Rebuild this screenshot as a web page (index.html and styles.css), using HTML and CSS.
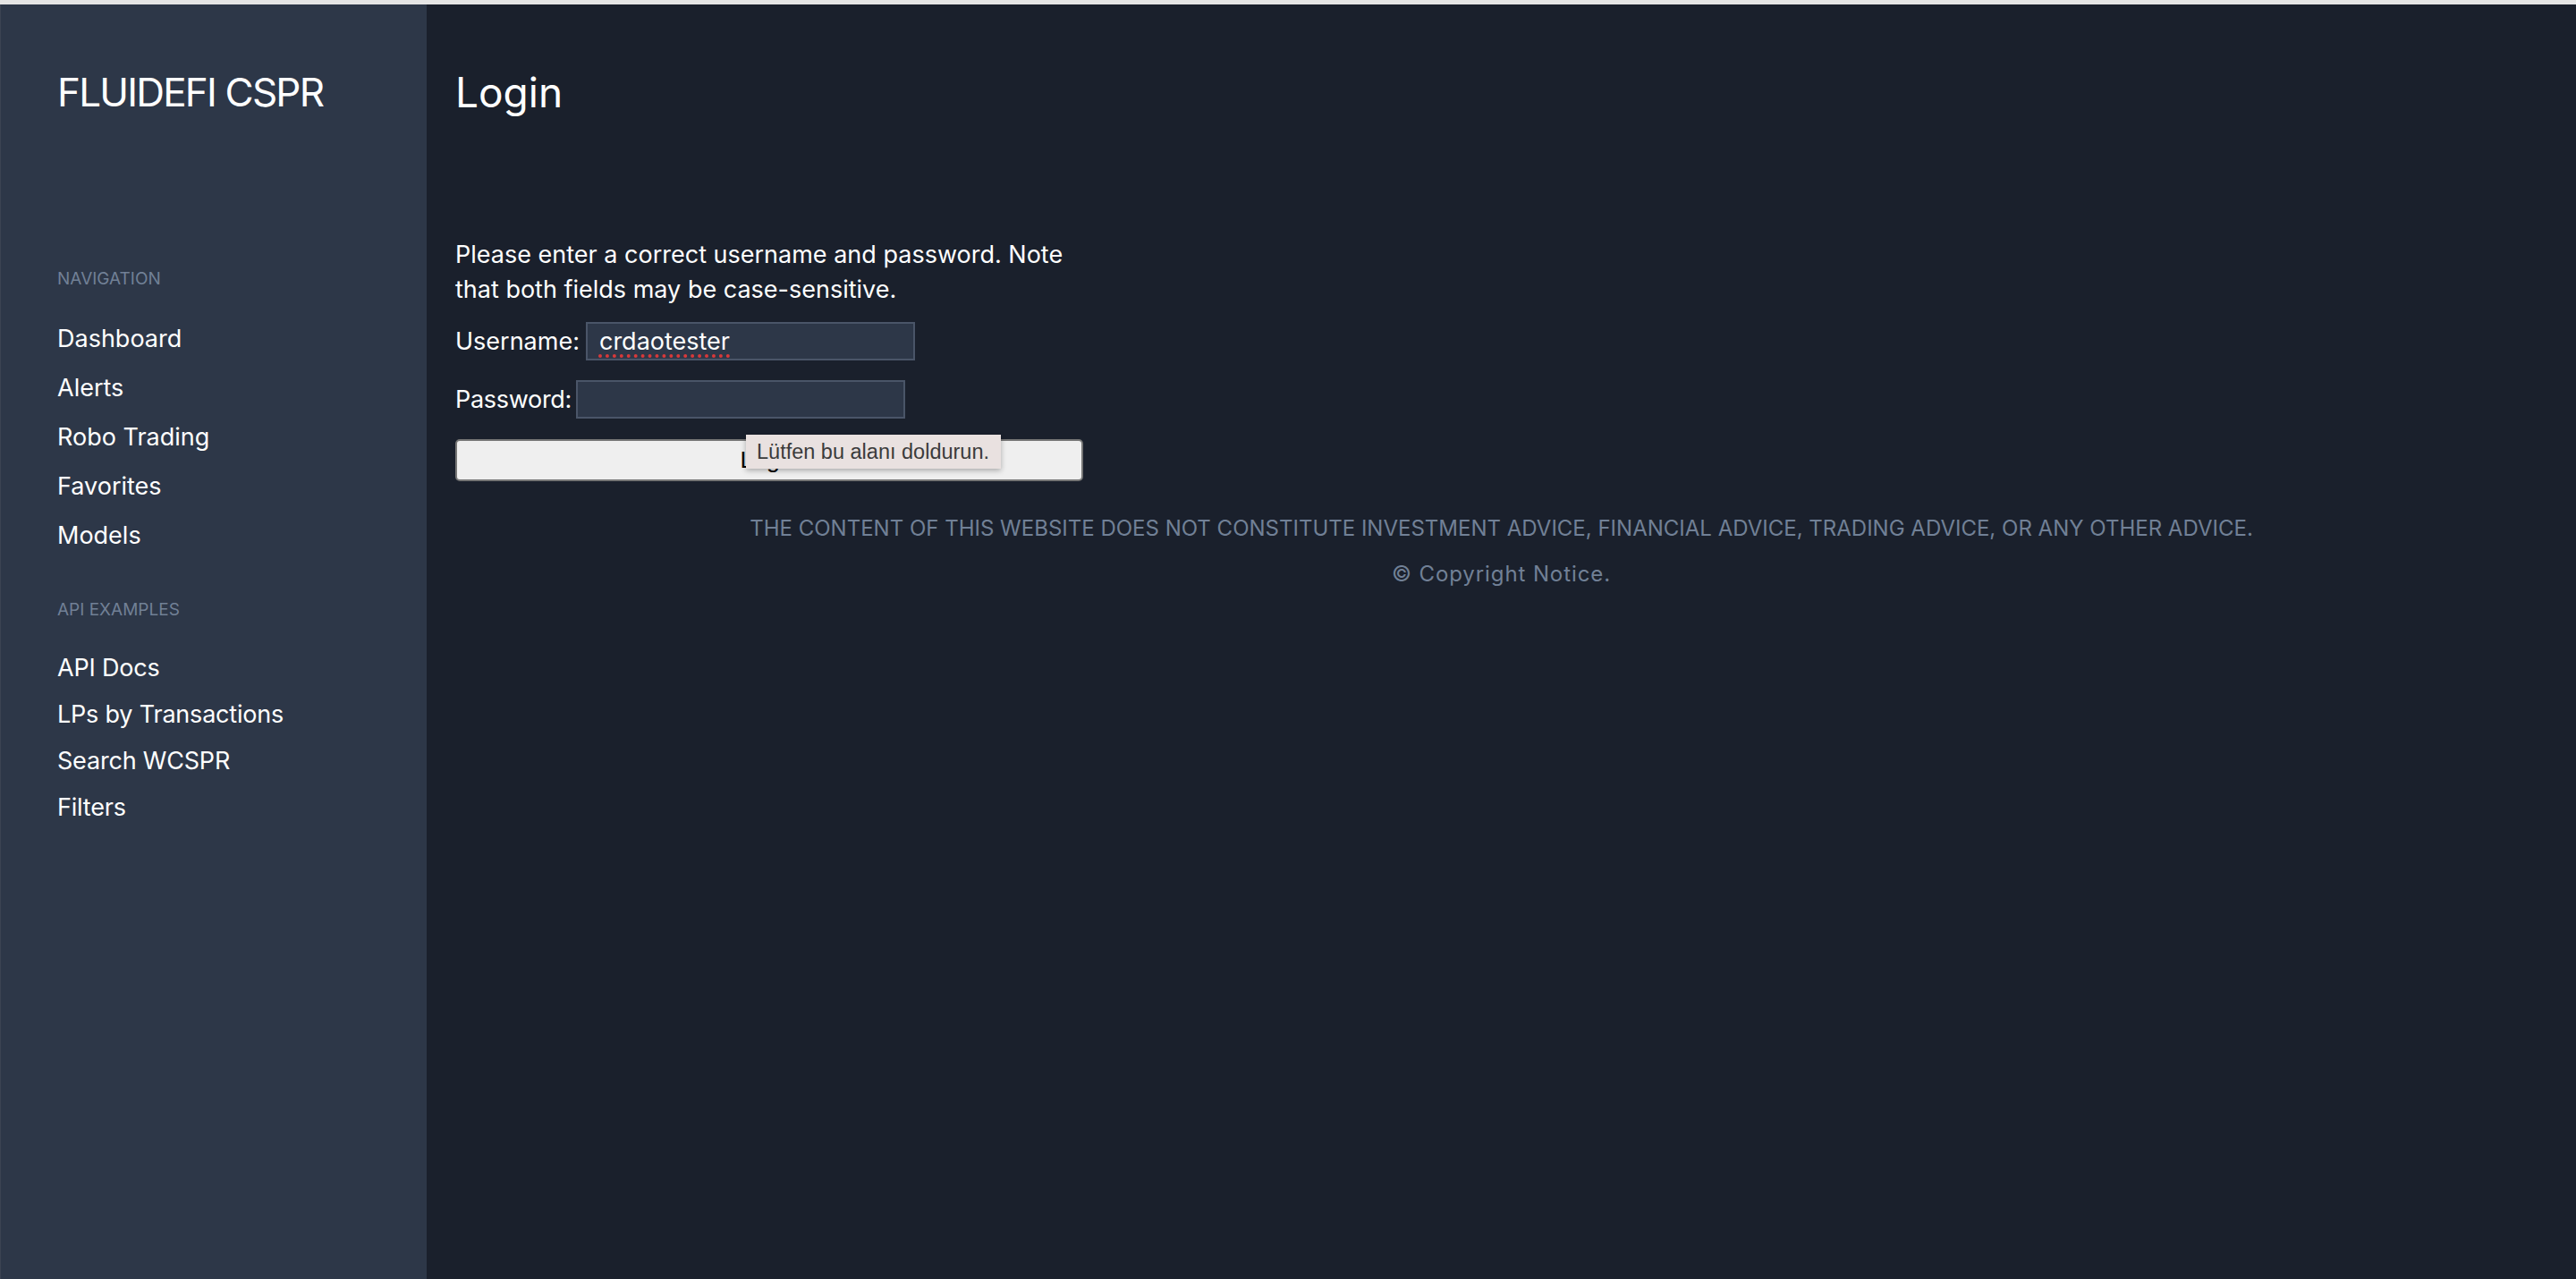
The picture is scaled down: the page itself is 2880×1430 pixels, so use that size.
FILE: index.html
```html
<!DOCTYPE html>
<html lang="en">
<head>
<meta charset="utf-8">
<title>Login | FLUIDEFI CSPR</title>
<link rel="stylesheet" href="styles.css">
</head>
<body>
<div class="page">
  <div class="topbar"></div>
  <div class="layout">
    <aside class="sidebar">
      <div class="brand">FLUIDEFI CSPR</div>
      <div class="nav-title nav-title-first">Navigation</div>
      <ul class="nav-list">
        <li><a href="#">Dashboard</a></li>
        <li><a href="#">Alerts</a></li>
        <li><a href="#">Robo Trading</a></li>
        <li><a href="#">Favorites</a></li>
        <li><a href="#">Models</a></li>
      </ul>
      <div class="nav-title nav-title-api">API Examples</div>
      <ul class="nav-list nav-list-api">
        <li><a href="#">API Docs</a></li>
        <li><a href="#">LPs by Transactions</a></li>
        <li><a href="#">Search WCSPR</a></li>
        <li><a href="#">Filters</a></li>
      </ul>
    </aside>
    <main class="main">
      <h1 class="title">Login</h1>
      <form class="login-form" onsubmit="return false">
        <p class="error">Please enter a correct username and password. Note that both fields may be case-sensitive.</p>
        <div class="field field-user">
          <label for="id_username">Username:</label>
          <div id="id_username" class="input input-user" role="textbox"><span class="misspelled">crdaotester</span></div>
        </div>
        <div class="field field-pass">
          <label for="id_password">Password:</label>
          <input id="id_password" class="input input-pass" type="password">
        </div>
        <div class="submit-wrap">
          <button class="submit" type="submit">Login</button>
          <div class="tooltip">Lütfen bu alanı doldurun.</div>
        </div>
      </form>
      <footer class="footer">
        <div class="disclaimer">THE CONTENT OF THIS WEBSITE DOES NOT CONSTITUTE INVESTMENT ADVICE, FINANCIAL ADVICE, TRADING ADVICE, OR ANY OTHER ADVICE.</div>
        <div class="copyright">© Copyright Notice.</div>
      </footer>
    </main>
  </div>
</div>
</body>
</html>
```

FILE: styles.css
```css
html, body {
  margin: 0;
  padding: 0;
  height: 100%;
  background: #1a202c;
}

body {
  font-family: "Inter", "Liberation Sans", sans-serif;
  color: #ffffff;
}

.page {
  display: flex;
  flex-direction: column;
  height: 100vh;
}

.topbar {
  height: 5px;
  background: #e5e5e5;
  flex: none;
}

.layout {
  flex: 1;
  display: flex;
  min-height: 0;
}

.sidebar {
  width: 477px;
  flex: none;
  box-sizing: border-box;
  background: #2d3748;
  border-left: 1px solid #3b4352;
  padding: 66px 0 0 63px;
}

.brand {
  font-size: 44px;
  line-height: 64px;
  font-weight: 400;
  letter-spacing: -1.8px;
  color: #ffffff;
}

.nav-title {
  font-size: 19px;
  line-height: 28px;
  color: #718096;
  text-transform: uppercase;
}

.nav-title-first {
  margin-top: 163px;
}

.nav-title-api {
  margin-top: 42px;
}

.nav-list {
  list-style: none;
  margin: 25px 0 0;
  padding: 0;
}

.nav-list li {
  font-size: 27px;
  line-height: 55px;
}

.nav-list-api {
  margin-top: 25px;
}

.nav-list-api li {
  line-height: 52px;
  letter-spacing: -0.2px;
}

.nav-list a {
  color: #ffffff;
  text-decoration: none;
}

.main {
  flex: 1;
  padding: 66px 32px 0;
}

.title {
  margin: 0;
  font-size: 46px;
  line-height: 64px;
  font-weight: 400;
}

.login-form {
  width: 702px;
  margin-top: 131px;
}

.error {
  margin: 0;
  font-size: 27px;
  line-height: 38.5px;
}

.field {
  display: flex;
  align-items: center;
  gap: 7px;
  font-size: 27px;
}

.field-user {
  margin-top: 17px;
}

.field-pass {
  margin-top: 22px;
}

.field-pass label {
  letter-spacing: -0.3px;
}

.input {
  width: 368px;
  height: 43px;
  box-sizing: border-box;
  background: #2d3748;
  border: 2px solid #4a5568;
  border-radius: 0;
  color: #ffffff;
  font-family: "Inter", "Liberation Sans", sans-serif;
  font-size: 27px;
  line-height: 39px;
  padding: 0 13px;
  outline: none;
}

.input-pass {
  margin-left: -2px;
}

.misspelled {
  text-decoration: underline dotted #d8393a;
  text-decoration-thickness: 4px;
  text-underline-offset: 5px;
}

.submit-wrap {
  position: relative;
  margin-top: 23px;
}

.submit {
  display: block;
  width: 702px;
  height: 47px;
  box-sizing: border-box;
  background: #efefef;
  border: 2px solid #767676;
  border-radius: 5px;
  color: #000000;
  font-family: "Liberation Sans", sans-serif;
  font-size: 26.67px;
  padding: 0;
}

.tooltip {
  position: absolute;
  left: 325px;
  top: -5px;
  height: 38px;
  line-height: 38px;
  padding: 0 13px 0 12px;
  background: #e9e1e0;
  color: #3b3b3b;
  font-family: "Liberation Sans", sans-serif;
  font-size: 23.5px;
  white-space: nowrap;
  box-shadow: 0 2px 6px rgba(0, 0, 0, 0.3);
}

.footer {
  margin-top: 35px;
  text-align: center;
  color: #718096;
  font-size: 24px;
}

.disclaimer {
  line-height: 36px;
}

.copyright {
  margin-top: 15px;
  line-height: 36px;
  letter-spacing: 0.9px;
}
```
